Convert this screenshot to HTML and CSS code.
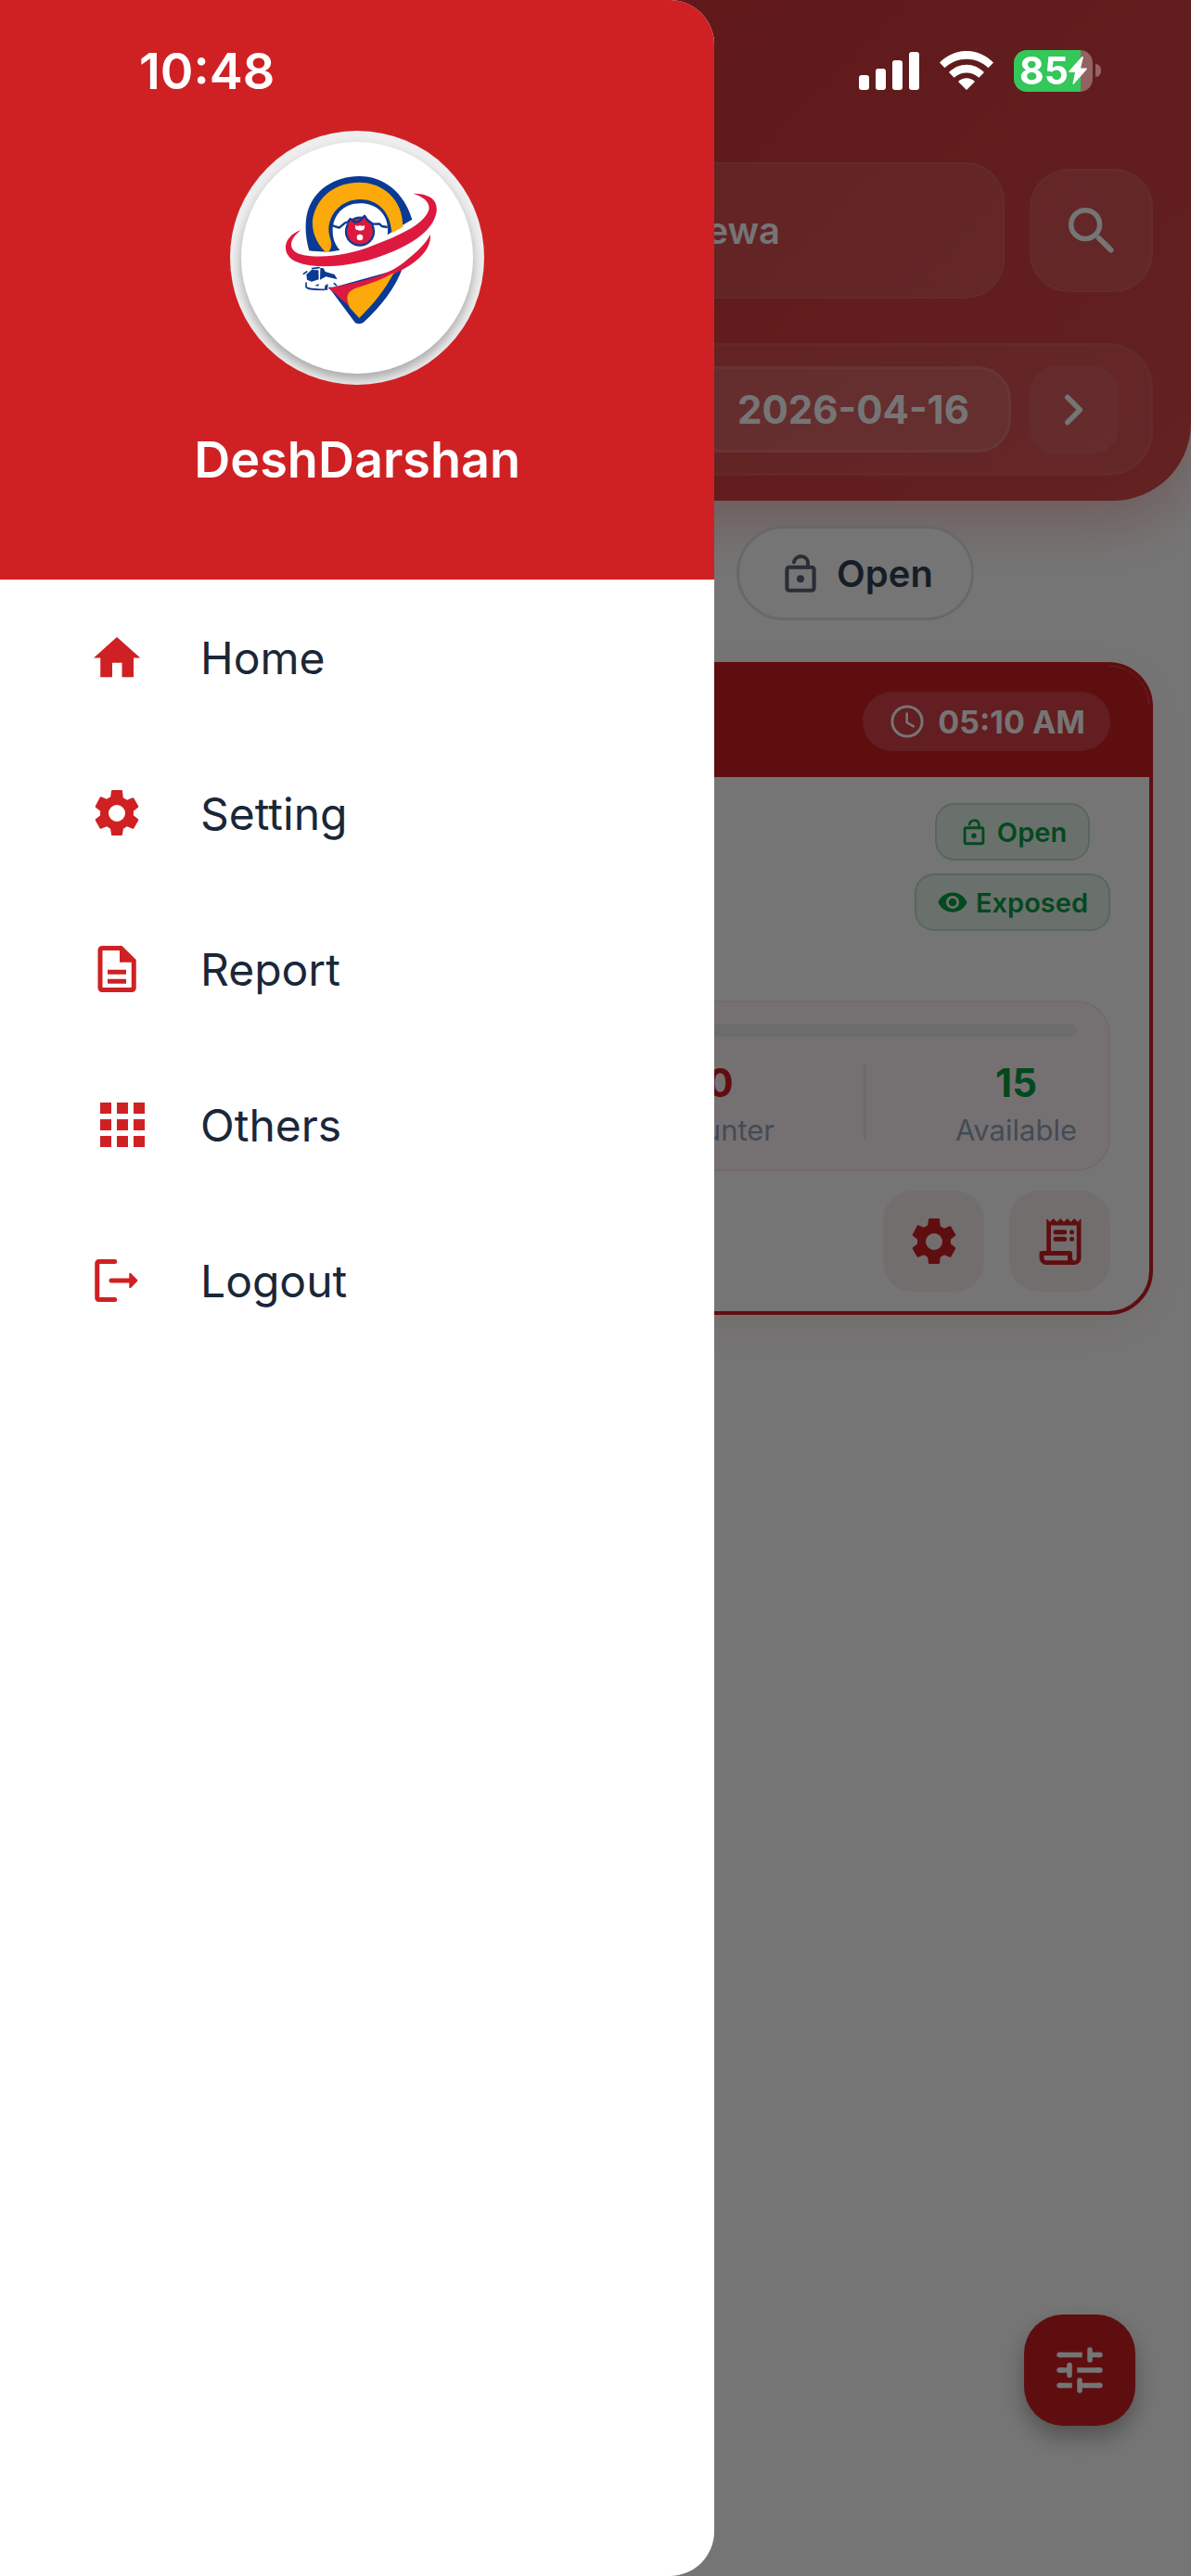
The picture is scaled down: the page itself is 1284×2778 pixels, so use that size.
FILE: index.html
```html
<!DOCTYPE html>
<html lang="en">
<head>
    <meta charset="UTF-8">
    <meta name="viewport" content="width=device-width, initial-scale=1.0">
    <title>DeshDarshan</title>
    <link rel="stylesheet" href="styles.css">
</head>
<body>
    <!-- Shared icons -->
    <svg class="sprite" aria-hidden="true">
        <symbol id="icon-gear" viewBox="0 0 24 24">
            <path d="M19.14 12.94c.04-.3.06-.61.06-.94s-.02-.64-.07-.94l2.03-1.58c.18-.14.23-.41.12-.61l-1.92-3.32c-.12-.22-.37-.29-.59-.22l-2.39.96c-.5-.38-1.03-.7-1.62-.94L14.4 2.41c-.04-.24-.24-.41-.48-.41h-3.84c-.24 0-.43.17-.47.41l-.36 2.54c-.59.24-1.13.57-1.62.94l-2.39-.96c-.22-.08-.47 0-.59.22L2.74 8.87c-.12.21-.08.47.12.61l2.03 1.58c-.05.3-.09.63-.09.94s.02.64.07.94l-2.03 1.58c-.18.14-.23.41-.12.61l1.92 3.32c.12.22.37.29.59.22l2.39-.96c.5.38 1.03.7 1.62.94l.36 2.54c.05.24.24.41.48.41h3.84c.24 0 .44-.17.47-.41l.36-2.54c.59-.24 1.13-.56 1.62-.94l2.39.96c.22.08.47 0 .59-.22l1.92-3.32c.12-.22.07-.47-.12-.61l-2.01-1.58zM12 15.6A3.6 3.6 0 1 1 12 8.4a3.6 3.6 0 0 1 0 7.2z"/>
        </symbol>
        <symbol id="icon-lock-open" viewBox="0 0 24 24">
            <rect x="5" y="9" width="14" height="12" rx="1.2" fill="none" stroke="currentColor" stroke-width="2"/>
            <circle cx="12" cy="15" r="1.9"/>
            <path d="M8.6 6.4a3.7 3.7 0 0 1 7.2-.4V9" fill="none" stroke="currentColor" stroke-width="1.9" stroke-linecap="round"/>
        </symbol>
    </svg>

    <div class="page">
        <header class="header">
            <div class="search-row">
                <button type="button" class="route">Sewa</button>
                <button type="button" class="search-btn" aria-label="Search">
                    <svg class="icon-lg" viewBox="0 0 24 24"><g fill="none" stroke="currentColor" stroke-width="2"><circle cx="9.5" cy="9.5" r="5.6"/><path d="M14.8 14.8l4.7 4.7" stroke-linecap="round" stroke-width="2.1"/></g></svg>
                </button>
            </div>
            <div class="date-row">
                <button type="button" class="date-box">2026-04-16</button>
                <button type="button" class="next-btn" aria-label="Next day">
                    <svg class="icon-lg" viewBox="0 0 24 24"><path d="M9.4 7.1l4.9 4.9-4.9 4.9" fill="none" stroke="currentColor" stroke-width="2" stroke-linecap="round" stroke-linejoin="round"/></svg>
                </button>
            </div>
        </header>

        <main>
            <div class="filters">
                <button type="button" class="chip">
                    <svg class="icon-md"><use href="#icon-lock-open"/></svg>
                    <span>Open</span>
                </button>
            </div>

            <section class="card">
                <div class="card-top">
                    <div class="time">
                        <svg class="icon-sm" viewBox="0 0 24 24"><g fill="none" stroke="currentColor"><circle cx="12" cy="12" r="9.2" stroke-width="1.7"/><path d="M11.8 7.2v5.4l4.2 2.5" stroke-width="1.5" stroke-linecap="round"/></g></svg>
                        <span>05:10 AM</span>
                    </div>
                </div>
                <div class="card-body">
                    <div class="badges">
                        <span class="badge badge-open">
                            <svg class="badge-icon"><use href="#icon-lock-open"/></svg>
                            Open
                        </span>
                        <span class="badge badge-exposed">
                            <svg class="badge-icon" viewBox="0 0 24 24"><path d="M12 4.5C7 4.5 2.73 7.61 1 12c1.73 4.39 6 7.5 11 7.5s9.27-3.11 11-7.5c-1.73-4.39-6-7.5-11-7.5zM12 17a5 5 0 1 1 0-10 5 5 0 0 1 0 10zm0-8a3 3 0 1 0 0 6 3 3 0 0 0 0-6z"/></svg>
                            Exposed
                        </span>
                    </div>

                    <div class="seats">
                        <div class="bar"></div>
                        <div class="stats">
                            <div class="stat">
                                <strong class="red">0</strong>
                                <span>Counter</span>
                            </div>
                            <div class="divider"></div>
                            <div class="stat">
                                <strong class="green">15</strong>
                                <span>Available</span>
                            </div>
                        </div>
                    </div>

                    <div class="actions">
                        <button type="button" class="action" aria-label="Trip settings">
                            <svg class="icon"><use href="#icon-gear"/></svg>
                        </button>
                        <button type="button" class="action" aria-label="Trip report">
                            <svg class="icon" viewBox="0 0 24 24">
                                <path d="M6.1 2l1.45 1.5L9.1 2l1.5 1.5L12.1 2l1.5 1.5L15.1 2l1.5 1.5L18.1 2l1.5 1.5L21 2v17.2a2.9 2.9 0 0 1-2.9 2.8H6a3 3 0 0 1-3-3v-1.8c0-.7.5-1.2 1.2-1.2H6.1zM8 5v11h8.2c.6 0 1 .4 1 1v2.2c0 1.3 1.9 1.3 1.9 0V5zM5 18v1.1c0 .6.4 1 1 1h9.2V18z" fill-rule="evenodd"/>
                                <path d="M10 7.9h3.9M10 10.9h3.9" stroke="currentColor" stroke-width="2" stroke-linecap="round"/>
                                <circle cx="17" cy="7.9" r="1"/><circle cx="17" cy="10.9" r="1"/>
                            </svg>
                        </button>
                    </div>
                </div>
            </section>
        </main>

        <button type="button" class="fab" aria-label="Filters">
            <svg class="icon-lg" viewBox="0 0 24 24"><g fill="none" stroke="currentColor" stroke-width="2"><path d="M13 6H4M20 6h-4M11 12h9M4 12h4M9 18H4M20 18h-8" stroke-linecap="butt"/><path d="M16 4v4M8 10v4M12 16v4M4 6h1M4 12h1M4 18h1M19 6h1M19 12h1M19 18h1" stroke-linecap="round"/></g></svg>
        </button>
    </div>

    <div class="scrim"></div>

    <aside class="drawer">
        <div class="drawer-header">
            <div class="avatar">
                <div class="avatar-inner">
                    <svg class="logo" viewBox="90 97 750 750" role="img" aria-label="DeshDarshan logo">
                        <!-- pin head -->
                        <path fill="#0a3a94" d="M310 449C297 405 296 362 303 330C322 252 393 208 472 208C552 208 618 262 643 348C618 362 590 380 563 398C572 335 530 296 475 296C420 296 386 335 386 385C386 412 394 430 409 447C375 455 340 453 310 449z"/>
                        <path fill="#fca90b" d="M364 455C335 428 318 390 321 350C334 270 400 228 472 228C550 228 614 285 613 372L577 392C573 322 530 283 475 283C415 283 374 330 373 380C373 405 386 420 380 440C377 450 371 455 364 455z"/>
                        <!-- mountains and face -->
                        <circle cx="474" cy="387" r="45" fill="#dd193f" stroke="#0a3a94" stroke-width="7"/>
                        <path fill="#dd193f" d="M434 366L443 348L459 359L474 354L489 339L500 354L514 366z"/>
                        <path fill="none" stroke="#0a3a94" stroke-width="7" stroke-linejoin="round" d="M386 368L407 375L426 359L434 357L443 346L459 358L474 353L489 336L500 353L518 363L537 362L545 370L563 373"/>
                        <path fill="#fff" d="M459 367q8 5 15 0q8 5 15 0c2 13-4 17-15 17s-17-4-15-17z"/>
                        <circle cx="474" cy="406" r="10" fill="#fff"/>
                        <!-- bus -->
                        <g fill="#0a3a94">
                            <path d="M301 526L318 511L340 512L341 542L318 549L303 543z"/>
                            <path d="M346 504L356 506L362 517L392 526L401 542L364 533L345 543z"/>
                            <path d="M361 562l10-6-2 21-9-2z"/>
                            <path d="M328 562l14-6-3 8z"/>
                        </g>
                        <path d="M292 524l10-7M320 507l22-3M300 553v14c8 8 30 8 60 8M375 570h23M391 555l7 7" fill="none" stroke="#0a3a94" stroke-width="5" stroke-linecap="round"/>
                        <!-- pin tip -->
                        <path fill="#0a3a94" d="M376 571L458 681C465 687 480 687 487 680C540 630 590 570 613 502L560 520z"/>
                        <path fill="#dd193f" d="M374 570C480 548 560 532 617 486C663 450 692 420 701 396C707 430 680 468 635 497C590 525 500 560 445 634C420 612 398 590 374 570z"/>
                        <path fill="#fca90b" d="M584 521C555 575 520 620 472 667L441 633C426 597 432 580 465 569C510 556 550 540 584 521z"/>
                        <!-- swoosh -->
                        <path fill="#dd193f" d="M284 382C236 398 220 440 246 470C285 512 420 505 520 474C625 440 712 390 722 322C727 277 688 264 646 264C682 275 704 295 696 320C680 365 600 400 520 431C430 468 335 476 280 460C240 446 244 412 284 382z"/>
                    </svg>
                </div>
            </div>
            <h1>DeshDarshan</h1>
        </div>
        <nav class="menu">
            <a href="#">
                <span class="menu-icon"><svg class="icon" viewBox="0 0 24 24"><path d="M10 20.5v-6.2h4.2v6.2h5v-8.3h2.9L12 3.2 2 12.2h2.9v8.3z"/></svg></span>
                Home
            </a>
            <a href="#">
                <span class="menu-icon"><svg class="icon"><use href="#icon-gear"/></svg></span>
                Setting
            </a>
            <a href="#">
                <span class="menu-icon">
                    <svg class="icon" viewBox="0 0 24 24"><path d="M5.6 2h8.6l6.1 6v12.2c0 1-.8 1.8-1.8 1.8H5.600c-1 0-1.800-.8-1.800-1.800V3.800c0-1 .8-1.800 1.800-1.800zm.2 2v16h12.500V9.100H13.200V4zM8 12.300h8v2H8zm0 4h8v2H8z" fill-rule="evenodd"/></svg>
                </span>
                Report
            </a>
            <a href="#">
                <span class="menu-icon"><svg class="icon-apps" viewBox="0 0 24 24"><path d="M4 8h4V4H4zm6 12h4v-4h-4zm-6 0h4v-4H4zm0-6h4v-4H4zm6 0h4v-4h-4zm6-10v4h4V4zm-6 4h4V4h-4zm6 6h4v-4h-4zm0 6h4v-4h-4z"/></svg></span>
                Others
            </a>
            <a href="#">
                <span class="menu-icon">
                    <svg class="icon" viewBox="0 0 24 24"><path d="M11.100 3.800H4.200a.7.700 0 0 0-.7.700v15a.7.700 0 0 0 .7.700h6.900M9.600 12h8.500" fill="none" stroke="currentColor" stroke-width="2" stroke-linecap="round"/><path d="M17.300 9.200c0-.5.500-.6.800-.3l2.700 2.700c.2.200.2.500 0 .7l-2.700 2.800c-.3.300-.8.200-.8-.3z"/></svg>
                </span>
                Logout
            </a>
        </nav>
    </aside>

    <div class="status-bar">
        <span class="clock">10:48</span>
        <div class="status-icons">
            <svg class="signal" viewBox="0 0 65 41"><rect y="25" width="11" height="16" rx="3"/><rect x="18" y="18" width="11" height="23" rx="3"/><rect x="36" y="9" width="11" height="32" rx="3"/><rect x="54" width="11" height="41" rx="3"/></svg>
            <svg class="wifi" viewBox="0 0 58 42"><path d="M0 12.500C16-4.200 42-4.200 58 12.500l-5.500 5.700C39 5.600 19 5.600 5.500 18.200zM10 23c11-11 27-11 38 0l-5.600 5.700c-8-7-18.800-7-26.800 0zM20 33c5-5 13-5 18 0l-9 9z"/></svg>
            <div class="battery">
                <span class="battery-level">85</span>
                <svg class="bolt" viewBox="0 0 20 30"><path d="M14.500 0L.5 15.500c-.6.700-.3 1.500.6 1.500H7L4.500 29c-.2 1 .5 1.300 1.200.6L19.500 14c.6-.7.300-1.500-.6-1.500H13L15.800 1c.2-1-.6-1.600-1.300-1z"/></svg>
            </div>
            <span class="battery-tip"></span>
        </div>
    </div>
</body>
</html>
```

FILE: styles.css
```css
* {
    box-sizing: border-box;
    margin: 0;
    padding: 0;
}

body {
    background-color: #fff;
    min-height: 100vh;
    font-family: Inter, 'Liberation Sans', sans-serif;
    overflow-x: hidden;
}

button {
    border: none;
    background: none;
    color: inherit;
    font-family: inherit;
    cursor: pointer;
}

svg {
    display: block;
    fill: currentColor;
    flex-shrink: 0;
}

.sprite {
    position: absolute;
    width: 0;
    height: 0;
}

.icon {
    width: 60px;
    height: 60px;
}

.icon-lg {
    width: 66px;
    height: 66px;
}

.icon-md {
    width: 50px;
    height: 50px;
}

.icon-sm {
    width: 42px;
    height: 42px;
}

.icon-apps {
    width: 72px;
    height: 72px;
}

/* Header */
.header {
    display: flex;
    flex-direction: column;
    gap: 48px;
    padding: 175px 41px 27px;
    background: linear-gradient(135deg, #cf2a2d, #d7494b);
    border-radius: 0 0 84px 84px;
    box-shadow: 0 24px 60px rgba(207, 33, 36, 0.25);
    color: #fff;
}

.search-row {
    display: flex;
    align-items: center;
    gap: 27px;
}

.route {
    flex: 1;
    height: 147px;
    padding-right: 240px;
    text-align: right;
    font-size: 40px;
    font-weight: 600;
    background-color: rgba(255, 255, 255, 0.1);
    border: 2px solid rgba(255, 255, 255, 0.06);
    border-radius: 42px;
}

.search-btn {
    display: flex;
    align-items: center;
    justify-content: center;
    width: 133px;
    height: 133px;
    background-color: rgba(255, 255, 255, 0.1);
    border: 2px solid rgba(255, 255, 255, 0.06);
    border-radius: 42px;
}

.date-row {
    display: flex;
    align-items: center;
    gap: 20px;
    height: 143px;
    padding: 0 34px;
    background-color: rgba(255, 255, 255, 0.08);
    border: 3px solid rgba(255, 255, 255, 0.06);
    border-radius: 48px;
}

.date-box {
    flex: 1;
    height: 93px;
    padding-right: 42px;
    text-align: right;
    font-size: 42px;
    font-weight: 700;
    background-color: rgba(255, 255, 255, 0.12);
    border: 3px solid rgba(255, 255, 255, 0.1);
    border-radius: 36px;
}

.next-btn {
    display: flex;
    align-items: center;
    justify-content: center;
    width: 96px;
    height: 96px;
    background-color: rgba(255, 255, 255, 0.08);
    border-radius: 30px;
}

/* Filter chips */
.filters {
    display: flex;
    justify-content: flex-end;
    padding: 27px 234px 45px 42px;
}

.chip {
    display: flex;
    align-items: center;
    justify-content: center;
    gap: 14px;
    width: 256px;
    height: 102px;
    background-color: #fff;
    border: 3px solid #e2e2e2;
    border-radius: 51px;
    color: #5b6478;
    font-size: 40px;
    font-weight: 600;
}

.chip span {
    color: #343f52;
}

/* Trip card */
.card {
    margin: 0 41px;
    background-color: #fff;
    border: 4px solid #cf2024;
    border-radius: 48px;
    box-shadow: 0 12px 48px rgba(207, 33, 36, 0.08);
    overflow: hidden;
}

.card-top {
    display: flex;
    justify-content: flex-end;
    padding: 28px 42px;
    background-color: #cf2024;
    color: #fff;
}

.time {
    display: flex;
    align-items: center;
    gap: 12px;
    height: 64px;
    padding: 0 27px;
    background-color: rgba(255, 255, 255, 0.16);
    border-radius: 32px;
    font-size: 34px;
    font-weight: 700;
}

.card-body {
    padding: 28px 42px 21px;
}

.badges {
    display: flex;
    flex-direction: column;
    align-items: center;
    gap: 14px;
    width: 211px;
    margin: 0 0 75px auto;
}

.badge {
    display: flex;
    align-items: center;
    justify-content: center;
    height: 62px;
    width: 100%;
    gap: 8px;
    background-color: #e8f5ec;
    border: 2px solid #c0dfca;
    border-radius: 21px;
    color: #079f46;
    font-size: 29px;
    font-weight: 600;
}

.badge-open {
    width: 167px;
}

.badge-icon {
    width: 34px;
    height: 34px;
}

.seats {
    padding: 23px 34px 17px;
    background-color: #fef6f8;
    border: 2px solid #fae4e7;
    border-radius: 36px;
}

.bar {
    height: 14px;
    background-color: #ebebeb;
    border-radius: 7px;
}

.stats {
    display: flex;
    justify-content: flex-end;
    align-items: center;
    gap: 96px;
    padding-top: 24px;
}

.stat {
    display: flex;
    flex-direction: column;
    align-items: center;
    color: #94a3b8;
    font-size: 31px;
    line-height: 50px;
}

.stat strong {
    font-size: 42px;
    line-height: 52px;
}

.red {
    color: #cf2024;
}

.green {
    color: #079f46;
}

.divider {
    width: 3px;
    height: 82px;
    margin-bottom: 10px;
    background-color: #efe8ea;
}

.actions {
    display: flex;
    justify-content: flex-end;
    gap: 27px;
    padding-top: 21px;
}

.action {
    display: flex;
    align-items: center;
    justify-content: center;
    width: 109px;
    height: 109px;
    background-color: #fbf0ef;
    border-radius: 32px;
    color: #cf2024;
}

.fab {
    display: flex;
    align-items: center;
    justify-content: center;
    position: fixed;
    right: 60px;
    bottom: 162px;
    width: 120px;
    height: 120px;
    background-color: #cf2024;
    border-radius: 42px;
    box-shadow: 0 12px 24px rgba(0, 0, 0, 0.3);
    color: #fff;
}

/* Drawer */
.scrim {
    position: fixed;
    inset: 0;
    background-color: rgba(0, 0, 0, 0.54);
}

.drawer {
    position: fixed;
    top: 0;
    bottom: 0;
    left: 0;
    width: 60%;
    background-color: #fff;
    border-radius: 0 48px 48px 0;
    overflow: hidden;
}

.drawer-header {
    display: flex;
    flex-direction: column;
    align-items: center;
    gap: 48px;
    height: 625px;
    padding-top: 141px;
    background-color: #cf2124;
    color: #fff;
}

.drawer-header h1 {
    font-size: 54px;
    font-weight: 600;
    line-height: 66px;
}

.avatar {
    width: 274px;
    height: 274px;
    padding: 12px;
    background-color: #eee;
    border-radius: 50%;
    overflow: hidden;
}

.avatar-inner {
    width: 250px;
    height: 250px;
    background-color: #fff;
    border-radius: 50%;
    box-shadow: 0 6px 12px rgba(0, 0, 0, 0.3);
}

.menu a {
    display: flex;
    align-items: center;
    height: 168px;
    padding-left: 96px;
    color: #1a2738;
    font-size: 48px;
    text-decoration: none;
}

.menu-icon {
    width: 120px;
    color: #cf2124;
}

/* Status bar */
.status-bar {
    display: flex;
    justify-content: space-between;
    align-items: center;
    position: fixed;
    top: 0;
    left: 0;
    right: 0;
    height: 152px;
    padding: 0 97px 0 150px;
    color: #fff;
}

.clock {
    font-size: 54px;
    font-weight: 600;
}

.status-icons {
    display: flex;
    align-items: center;
}

.signal {
    width: 65px;
    height: 41px;
}

.wifi {
    width: 58px;
    height: 42px;
    margin: 0 22px;
}

.battery {
    display: flex;
    align-items: center;
    justify-content: center;
    width: 85px;
    height: 45px;
    background: linear-gradient(to right, #34c759 85%, #936262 85%);
    border-radius: 14px;
}

.battery-level {
    font-size: 41px;
    font-weight: 700;
    line-height: 45px;
}

.bolt {
    width: 20px;
    height: 30px;
}

.battery-tip {
    width: 6px;
    height: 14px;
    margin-left: 3px;
    background-color: #936262;
    border-radius: 0 6px 6px 0;
}
```
